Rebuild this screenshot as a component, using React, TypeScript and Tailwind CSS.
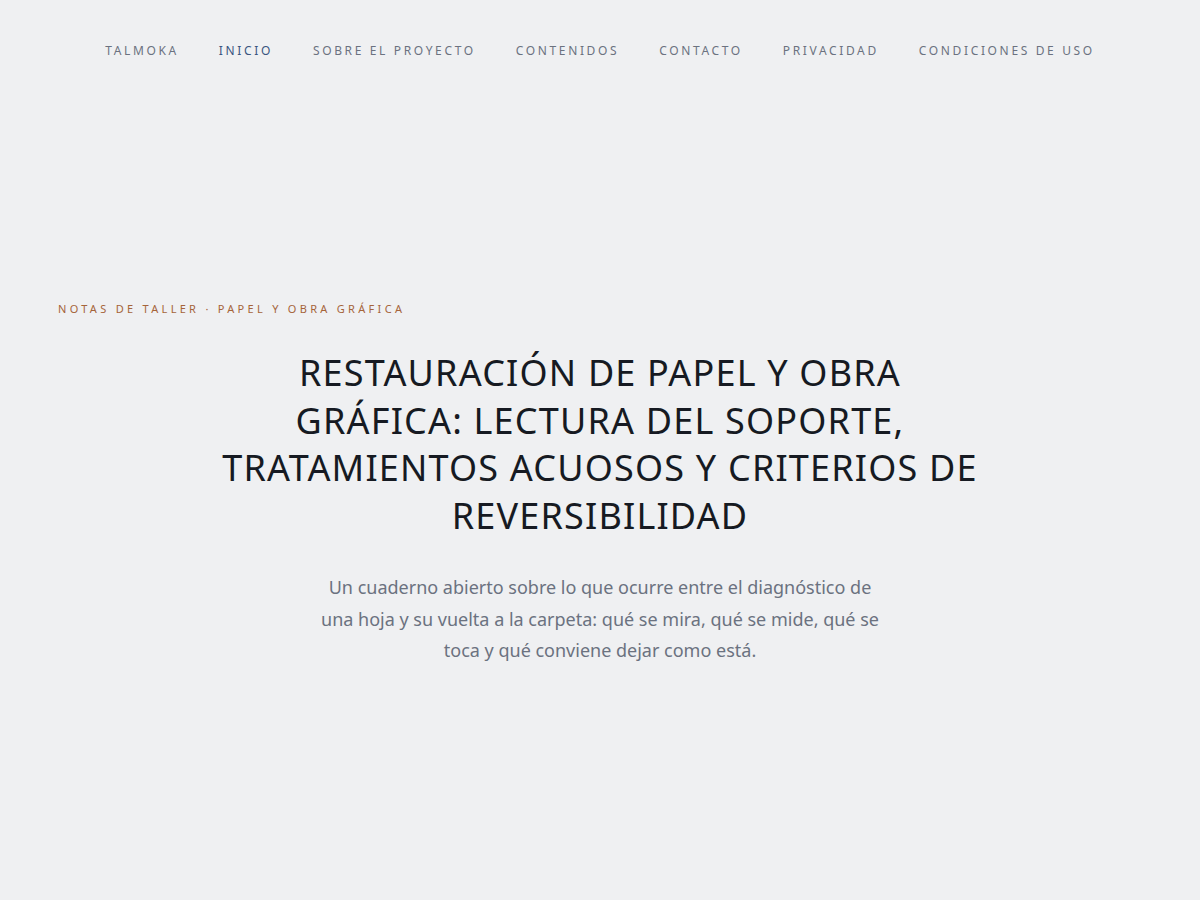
import React from 'react';

const navItems = [
  { label: 'Talmoka', active: false },
  { label: 'Inicio', active: true },
  { label: 'Sobre el proyecto', active: false },
  { label: 'Contenidos', active: false },
  { label: 'Contacto', active: false },
  { label: 'Privacidad', active: false },
  { label: 'Condiciones de uso', active: false },
];

export default function App() {
  return (
    <div className="min-h-[900px] bg-[#eff0f2] font-['Noto_Sans',sans-serif]">
      {/* Top navigation */}
      <nav className="flex items-center justify-center gap-[40px] pt-[42px]">
        {navItems.map((item) => (
          <a
            key={item.label}
            href="#"
            className={`text-[12px] uppercase leading-[17px] tracking-[0.22em] ${
              item.active ? 'text-[#3a5580]' : 'text-[#6b7280]'
            }`}
          >
            {item.label}
          </a>
        ))}
      </nav>

      {/* Hero */}
      <section className="px-[58px] pt-[242px]">
        <p className="text-[11px] uppercase leading-[16px] tracking-[0.3em] text-[#a5643a]">
          Notas de taller · Papel y obra gráfica
        </p>
        <h1 className="mx-auto mt-[32px] max-w-3xl text-center text-[36px] font-normal uppercase leading-[47.5px] tracking-[0.033em] text-[#161a22]">
          Restauración de papel y obra gráfica: lectura del soporte, tratamientos acuosos y criterios de reversibilidad
        </h1>
        <p className="mx-auto mt-[33px] max-w-[576px] text-center text-[18px] leading-[31.5px] text-[#6b7280]">
          Un cuaderno abierto sobre lo que ocurre entre el diagnóstico de una hoja y su vuelta a la carpeta: qué se mira, qué se mide, qué se toca y qué conviene dejar como está.
        </p>
      </section>
    </div>
  );
}
